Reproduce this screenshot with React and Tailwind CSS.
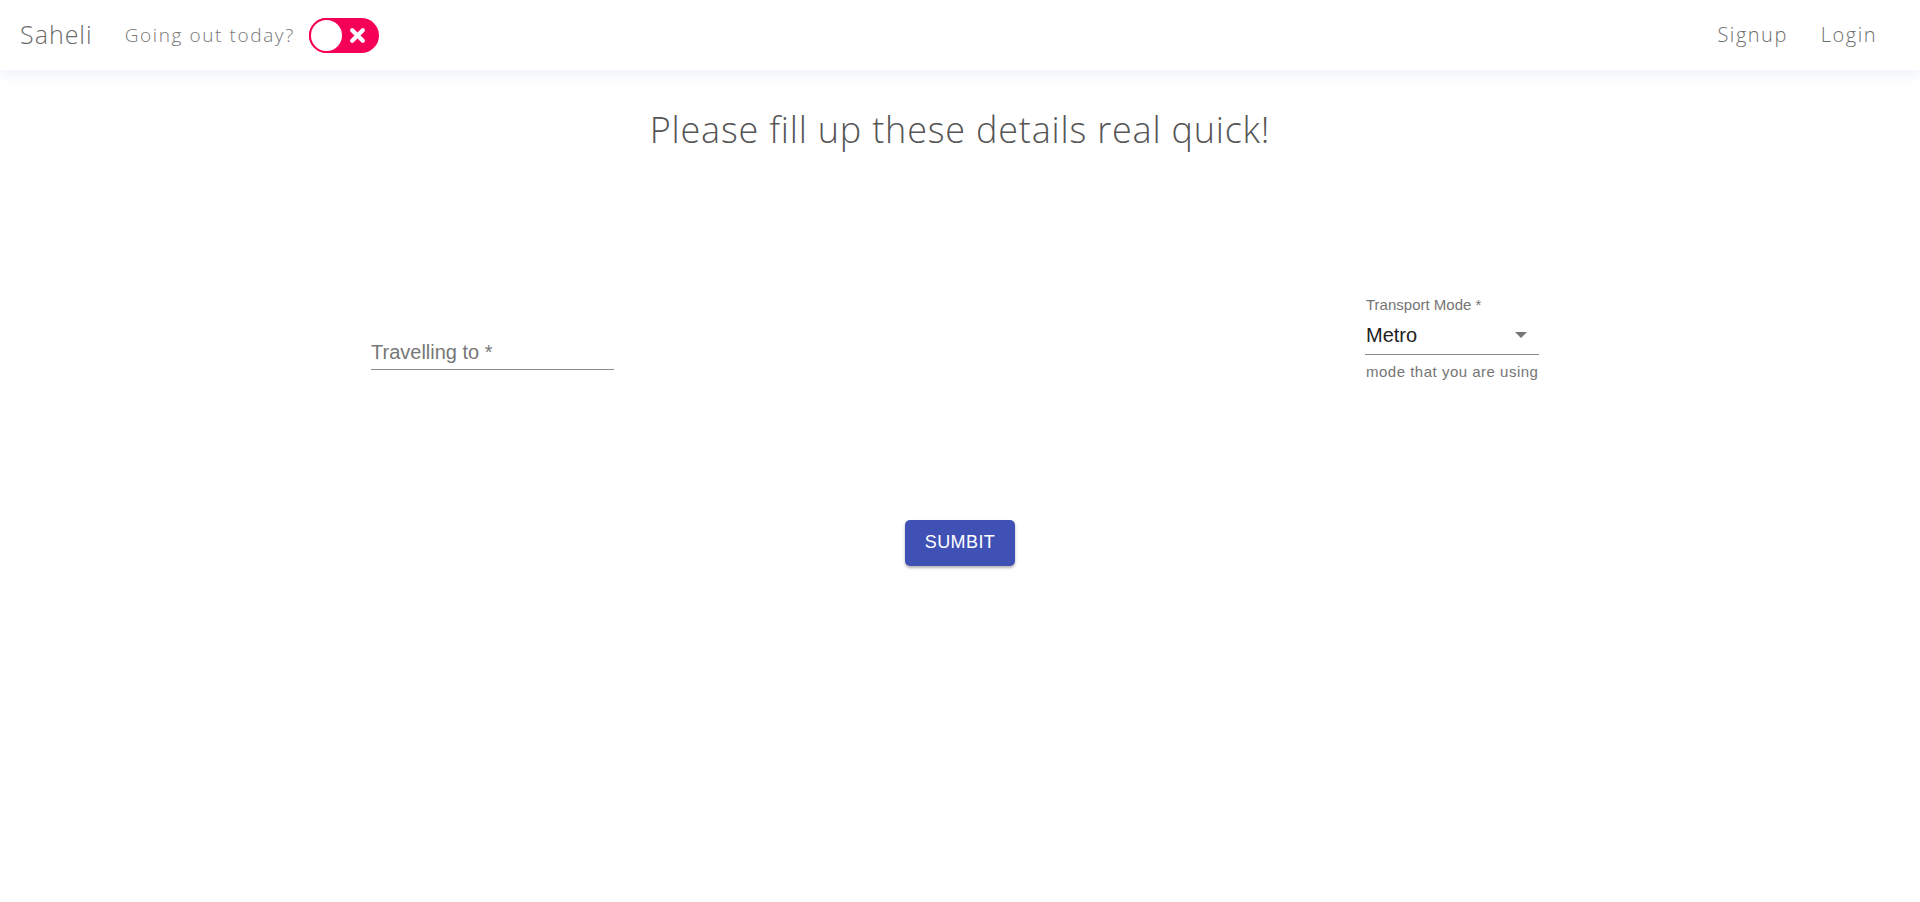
import React, { useState } from 'react'

const Toggle = ({ on, onChange }) => {
  return (
    <button
      onClick={() => onChange(!on)}
      className="relative w-[70px] h-[35px] rounded-full bg-[#f50057] flex items-center"
    >
      <span className="absolute left-0 top-0 w-[35px] h-[35px] rounded-full bg-white border-2 border-[#f50057]" />
      <svg className="absolute right-[13px] top-[9px]" width="17" height="17" viewBox="0 0 16 16">
        <path d="M3 3 L13 13 M13 3 L3 13" stroke="white" strokeWidth="4" strokeLinecap="round" />
      </svg>
    </button>
  )
}

const Navbar = () => {
  const [goingOut, setGoingOut] = useState(false)

  return (
    <nav className="h-[70px] bg-white flex items-center justify-between pl-5 pr-[43px] shadow-[0_4px_14px_rgba(200,215,240,0.35)] font-['Open_Sans',sans-serif]">
      <div className="flex items-center">
        <span className="text-[25px] font-light text-[#6b6b6b] tracking-[1px]">Saheli</span>
        <span className="ml-[32px] text-[19px] font-light text-[#777] tracking-[1.6px]">Going out today?</span>
        <div className="ml-[14px]">
          <Toggle on={goingOut} onChange={setGoingOut} />
        </div>
      </div>
      <div className="flex items-center gap-[33px] text-[20px] font-light text-[#6f6f6f] tracking-[1.5px]">
        <a href="#">Signup</a>
        <a href="#">Login</a>
      </div>
    </nav>
  )
}

const App = () => {
  const [destino, setDestino] = useState('')

  return (
    <div className="min-h-[902px] bg-white">
      <Navbar />

      <h1 className="mt-[33px] text-center text-[36px] font-extralight text-[#555] tracking-[0.8px] font-['Open_Sans',sans-serif]">
        Please fill up these details real quick!
      </h1>

      <div className="flex justify-between items-start pl-[371px] pr-[381px] mt-[140px] font-['Liberation_Sans',Arial,sans-serif]">
        <div className="w-[243px] mt-[39px]">
          <input
            value={destino}
            onChange={(e) => setDestino(e.target.value)}
            placeholder="Travelling to *"
            className="w-full h-[34px] text-[20px] text-[#333] placeholder:text-[#777] border-b border-[#8c8c8c] outline-none bg-transparent"
          />
        </div>

        <div className="w-[174px]">
          <div className="pl-[1px] text-[15px] text-[#757575] leading-[16px]">Transport Mode *</div>
          <div className="flex items-center justify-between h-[42px] pt-[2px] pl-[1px] border-b border-[#8c8c8c] pr-[12px]">
            <span className="text-[20px] text-[#222]">Metro</span>
            <svg width="12" height="6" viewBox="0 0 12 6">
              <path d="M0 0 L12 0 L6 6 Z" fill="#757575" />
            </svg>
          </div>
          <div className="mt-[6px] pl-[1px] text-[15px] text-[#757575] tracking-[0.5px] whitespace-nowrap">mode that you are using</div>
        </div>
      </div>

      <div className="flex justify-center mt-[136px]">
        <button className="w-[110px] h-[46px] rounded-[5px] bg-[#3f51b5] text-white text-[18px] tracking-[0.4px] shadow-[0_2px_3px_rgba(0,0,0,0.3)] font-['Liberation_Sans',Arial,sans-serif]">
          SUMBIT
        </button>
      </div>
    </div>
  )
}

export default App
